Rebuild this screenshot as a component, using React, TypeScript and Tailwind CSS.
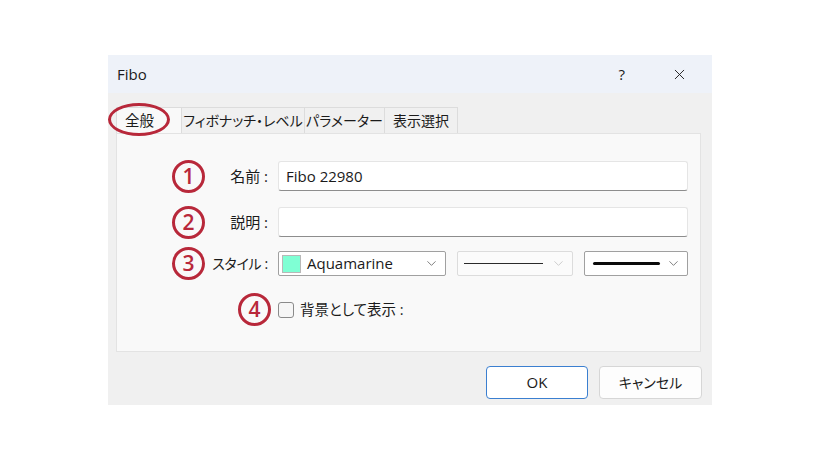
import { ChevronDown, X } from "lucide-react";

const font = "font-['Open_Sans','Noto_Sans_CJK_JP',sans-serif] [font-feature-settings:'palt']";

function Badge({ n }: { n: string }) {
  return (
    <div className="w-[33px] h-[33px] shrink-0 rounded-full border-[3.5px] border-[#b8283a] flex items-center justify-center text-[#b8283a] text-[21px] font-semibold leading-none font-['Open_Sans',sans-serif]">
      {n}
    </div>
  );
}

function Label({ text, small }: { text: string; small?: boolean }) {
  return (
    <div
      className={`w-[65px] shrink-0 text-right text-[#1b1b1b] pr-[2px] ${
        small ? "text-[14px] tracking-[-0.3px]" : "text-[15px]"
      }`}
    >
      {text}
    </div>
  );
}

function Chevron({ light }: { light?: boolean }) {
  return (
    <ChevronDown
      size={15}
      strokeWidth={1.2}
      className={light ? "text-[#bdbdbd]" : "text-[#555]"}
    />
  );
}

export default function App() {
  return (
    <div className={`w-[820px] h-[461px] bg-white pt-[55px] pl-[108px] ${font}`}>
      <div className="w-[604px] h-[350px] flex flex-col bg-[#f0f0f0]">
        {/* title bar */}
        <div className="h-[38px] shrink-0 bg-[#eef2f9] flex items-center pl-[9px] pr-[24px]">
          <span className="text-[15px] text-[#1a1a1a]">Fibo</span>
          <span className="ml-auto text-[15px] text-[#1a1a1a] mr-[46px]">?</span>
          <X size={17} strokeWidth={1.3} className="text-[#1a1a1a]" />
        </div>

        <div className="flex-1 pt-[14px] pl-[8px] pr-[11px] flex flex-col">
          {/* tabs */}
          <div className="flex h-[26px] text-[14px] text-[#1b1b1b]">
            <div className="relative w-[66px] bg-[#f9f9f9] border border-b-0 border-[#dcdcdc] flex items-center pl-[8px] text-[14.5px]">
              全般
              <div className="absolute left-[-9px] top-[-5px] w-[62px] h-[33px] rounded-[50%] border-[3px] border-[#b8283a]" />
            </div>
            <div className="w-[123px] border-t border-r border-[#dcdcdc] bg-[#f0f0f0] flex items-center justify-center">
              フィボナッチ・レベル
            </div>
            <div className="w-[80px] border-t border-r border-[#dcdcdc] bg-[#f0f0f0] flex items-center justify-center">
              パラメーター
            </div>
            <div className="w-[73px] border-t border-r border-[#dcdcdc] bg-[#f0f0f0] flex items-center justify-center">
              表示選択
            </div>
          </div>

          {/* panel */}
          <div className="h-[219px] bg-[#f9f9f9] border border-[#e3e3e3] pr-[12px] pt-[27px] flex flex-col">
            <div className="flex items-center h-[30px] pl-[55px] gap-[8px]">
              <div className="flex items-center">
                <Badge n="1" />
                <Label text="名前 :" />
              </div>
              <div className="flex-1 h-[30px] bg-white border border-[#e5e5e5] border-b-[#8d8d8d] rounded-[3px] flex items-center px-[7px] text-[15px] text-[#1a1a1a]">
                Fibo 22980
              </div>
            </div>

            <div className="flex items-center h-[30px] pl-[55px] gap-[8px] mt-[16px]">
              <div className="flex items-center">
                <Badge n="2" />
                <Label text="説明 :" />
              </div>
              <div className="flex-1 h-[30px] bg-white border border-[#e5e5e5] border-b-[#8d8d8d] rounded-[3px]" />
            </div>

            <div className="flex items-center h-[25px] pl-[55px] gap-[8px] mt-[14px]">
              <div className="flex items-center">
                <Badge n="3" />
                <Label text="スタイル :" small />
              </div>
              <div className="w-[168px] h-[25px] bg-white border border-[#a0a0a0] rounded-[2px] flex items-center pl-[3px] pr-[6px]">
                <div className="w-[19px] h-[18px] bg-[#7fffd4] border border-[#b8b8b8]" />
                <span className="ml-[6px] text-[15px] text-[#1a1a1a]">Aquamarine</span>
                <span className="ml-auto">
                  <Chevron />
                </span>
              </div>
              <div className="ml-[3px] w-[116px] h-[25px] bg-[#fbfbfb] border border-[#dcdcdc] rounded-[2px] flex items-center pl-[6px] pr-[6px]">
                <div className="w-[79px] h-[1px] bg-[#2a2a2a]" />
                <span className="ml-auto">
                  <Chevron light />
                </span>
              </div>
              <div className="ml-[3px] flex-1 h-[25px] bg-white border border-[#a0a0a0] rounded-[2px] flex items-center pl-[8px] pr-[6px]">
                <div className="w-[67px] h-[3.5px] rounded-full bg-[#0a0a0a]" />
                <span className="ml-auto">
                  <Chevron />
                </span>
              </div>
            </div>

            <div className="flex items-center h-[33px] pl-[121px] mt-[17px]">
              <Badge n="4" />
              <div className="ml-[7px] w-[16px] h-[16px] rounded-[3px] border border-[#8a8a8a] bg-[#f6f6f6]" />
              <span className="ml-[6px] text-[14.5px] text-[#1b1b1b]">背景として表示 :</span>
            </div>
          </div>

          {/* buttons */}
          <div className="flex justify-end gap-[11px] mt-[14px] mr-[-1px]">
            <button className="w-[102px] h-[33px] bg-white border border-[#3b7fd0] rounded-[4px] text-[15px] text-[#1a1a1a]">
              OK
            </button>
            <button className="w-[103px] h-[33px] bg-[#fdfdfd] border border-[#d6d6d6] rounded-[4px] text-[14px] text-[#1a1a1a]">
              キャンセル
            </button>
          </div>
        </div>
      </div>
    </div>
  );
}
